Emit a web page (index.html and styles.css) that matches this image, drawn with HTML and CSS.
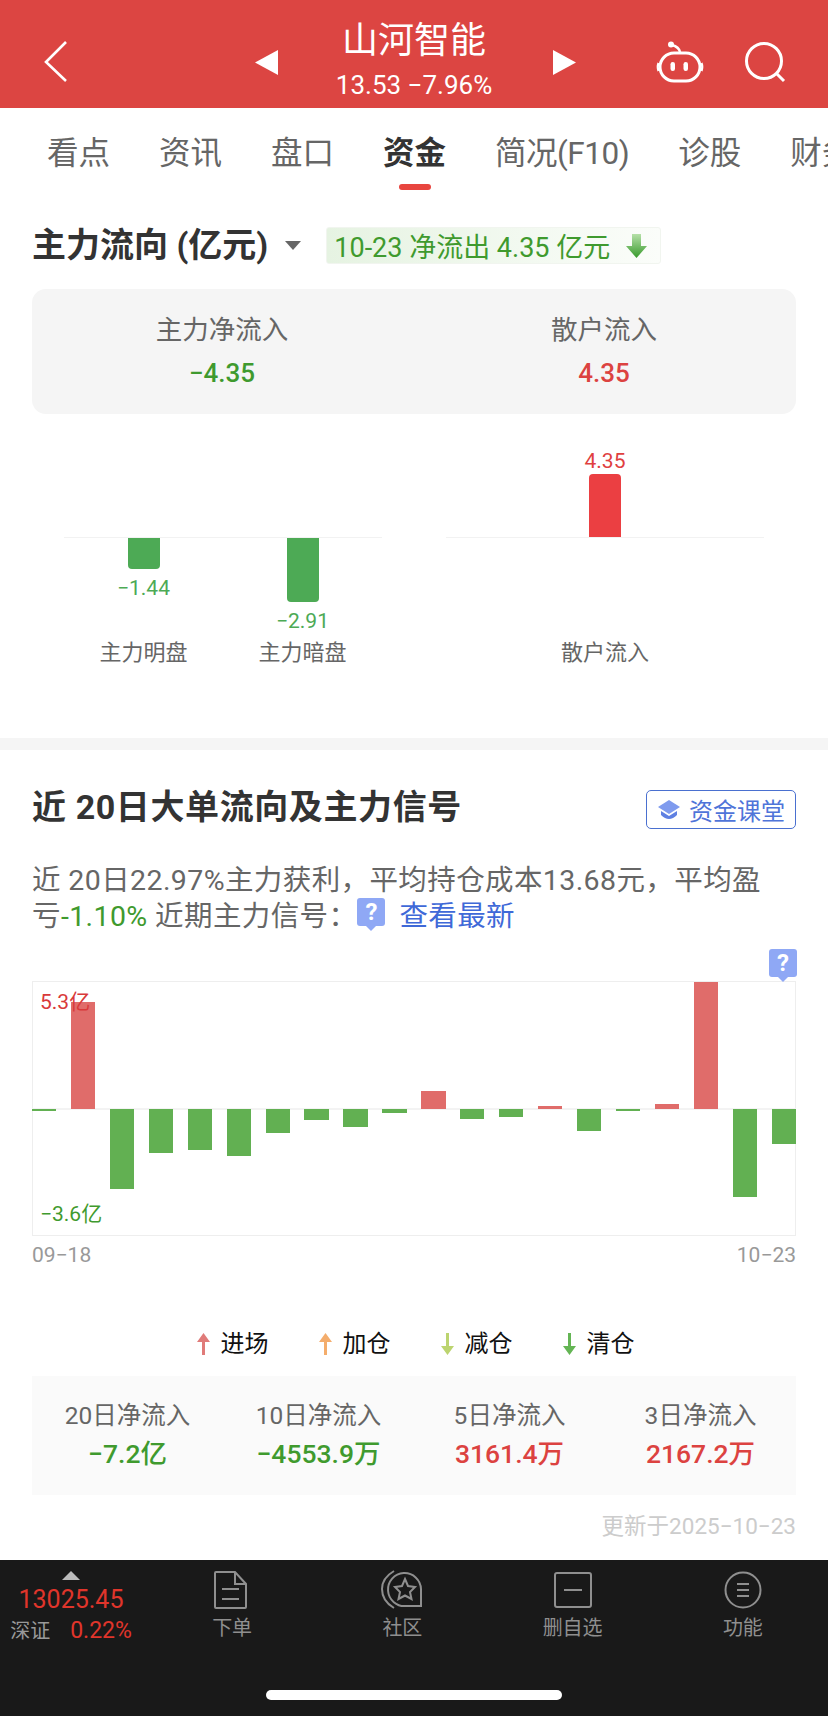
FILE: index.html
```html
<!DOCTYPE html>
<html lang="zh-CN">
<head>
    <meta charset="UTF-8">
    <meta name="viewport" content="width=device-width, initial-scale=1.0">
    <title>山河智能 资金</title>
    <link rel="stylesheet" href="styles.css">
</head>
<body>
<div class="page">

  <!-- 顶部导航 -->
  <header class="topbar">
    <div class="topbar-left">
      <svg width="24" height="42" viewBox="0 0 24 42"><polyline points="22,1 2,21 22,40" fill="none" stroke="#fff" stroke-width="2.6"/></svg>
    </div>
    <div class="stock-switch">
      <svg width="23" height="25" viewBox="0 0 23 25"><polygon points="23,0 0,12.5 23,25" fill="#fff"/></svg>
      <div class="stock-name">
        <div class="stock-title">山河智能</div>
        <div class="stock-price">13.53 −7.96%</div>
      </div>
      <svg class="stock-next" width="23" height="25" viewBox="0 0 23 25"><polygon points="0,0 23,12.5 0,25" fill="#fff"/></svg>
    </div>
    <div class="topbar-right">
      <svg width="48" height="42" viewBox="0 0 48 42" fill="none" stroke="#fff" stroke-width="3">
        <rect x="4" y="12" width="40" height="28" rx="14"/>
        <path d="M2.5 22 Q1 26 2.5 30 M45.5 22 Q47 26 45.5 30" stroke-width="2.2"/>
        <path d="M24 11 Q23 6 16 4" stroke-width="2.5"/>
        <circle cx="15" cy="3.5" r="3" fill="#fff" stroke="none"/>
        <rect x="14.5" y="21" width="4.5" height="9" rx="2.2" fill="#fff" stroke="none"/>
        <rect x="27.5" y="21" width="4.5" height="9" rx="2.2" fill="#fff" stroke="none"/>
      </svg>
      <svg width="42" height="42" viewBox="0 0 42 42" fill="none" stroke="#fff" stroke-width="3">
        <circle cx="19" cy="20" r="17.5"/>
        <path d="M32 33 L39 40"/>
      </svg>
    </div>
  </header>

  <!-- 标签栏 -->
  <nav class="tabs">
    <div class="tab">看点</div>
    <div class="tab">资讯</div>
    <div class="tab">盘口</div>
    <div class="tab on">资金</div>
    <div class="tab tab-wide">简况(F10)</div>
    <div class="tab">诊股</div>
    <div class="tab">财务</div>
  </nav>

  <!-- 主力流向 -->
  <section class="flow">
    <div class="flow-head">
      <h2 class="flow-title">主力流向 (亿元)</h2>
      <svg class="caret" width="16" height="9" viewBox="0 0 16 9"><polygon points="0,0 16,0 8,9" fill="#666"/></svg>
      <div class="flow-badge">
        <span>10-23 净流出 4.35 亿元</span>
        <svg width="21" height="24" viewBox="0 0 21 24">
          <defs><linearGradient id="arrowFill" x1="0" y1="0" x2="0" y2="1"><stop offset="0" stop-color="#b5e0a8"/><stop offset="1" stop-color="#379a2b"/></linearGradient></defs>
          <polygon points="6,0 15,0 15,12 21,12 10.5,24 0,12 6,12" fill="url(#arrowFill)"/>
        </svg>
      </div>
    </div>

    <div class="flow-card">
      <div class="flow-cell">
        <div class="flow-label">主力净流入</div>
        <div class="flow-value down">−4.35</div>
      </div>
      <div class="flow-cell">
        <div class="flow-label">散户流入</div>
        <div class="flow-value up">4.35</div>
      </div>
    </div>

    <div class="split">
      <div class="split-group">
        <div class="split-col">
          <div class="split-up"></div>
          <div class="split-down">
            <div class="split-bar bar-down" style="height:31px"></div>
            <div class="split-num num-down">−1.44</div>
          </div>
          <div class="split-name">主力明盘</div>
        </div>
        <div class="split-col">
          <div class="split-up"></div>
          <div class="split-down">
            <div class="split-bar bar-down" style="height:64px"></div>
            <div class="split-num num-down">−2.91</div>
          </div>
          <div class="split-name">主力暗盘</div>
        </div>
      </div>
      <div class="split-group">
        <div class="split-col">
          <div class="split-up">
            <div class="split-num num-up">4.35</div>
            <div class="split-bar bar-up" style="height:63px"></div>
          </div>
          <div class="split-down"></div>
          <div class="split-name">散户流入</div>
        </div>
      </div>
    </div>
  </section>

  <div class="band"></div>

  <!-- 近20日大单 -->
  <section class="large">
    <div class="large-head">
      <h2 class="large-title">近 20日大单流向及主力信号</h2>
      <div class="class-btn">
        <svg width="22" height="22" viewBox="0 0 22 22">
          <polygon points="11,1 22,8 11,15 0,8" fill="#7f9bee"/>
          <path d="M3 12 L11 17 L19 12 V16 Q11 24 3 16 Z" fill="#5f80e2"/>
        </svg>
        <span>资金课堂</span>
      </div>
    </div>

    <p class="large-text">近 20日22.97%主力获利，平均持仓成本13.68元，平均盈<br>亏<span class="text-down">-1.10%</span> 近期主力信号：<span class="qmark">?</span><span class="text-link">查看最新</span></p>

    <div class="chart">
      <span class="qmark chart-q">?</span>
      <span class="chart-max">5.3亿</span>
      <span class="chart-min">−3.6亿</span>
      <div class="chart-bars" id="chartBars"></div>
    </div>
    <div class="chart-dates"><span>09−18</span><span>10−23</span></div>

    <div class="legend">
      <div class="legend-item">
        <svg width="13" height="22" viewBox="0 0 13 22"><polygon points="6.5,0 13,9 8,9 8,22 5,22 5,9 0,9" fill="#e07b79"/></svg>
        <span>进场</span>
      </div>
      <div class="legend-item">
        <svg width="13" height="22" viewBox="0 0 13 22"><polygon points="6.5,0 13,9 8,9 8,22 5,22 5,9 0,9" fill="#f4ad6c"/></svg>
        <span>加仓</span>
      </div>
      <div class="legend-item">
        <svg width="13" height="22" viewBox="0 0 13 22"><polygon points="5,0 8,0 8,13 13,13 6.5,22 0,13 5,13" fill="#bcd46f"/></svg>
        <span>减仓</span>
      </div>
      <div class="legend-item">
        <svg width="13" height="22" viewBox="0 0 13 22"><polygon points="5,0 8,0 8,13 13,13 6.5,22 0,13 5,13" fill="#64b554"/></svg>
        <span>清仓</span>
      </div>
    </div>

    <div class="stats">
      <div class="stat"><div class="stat-label">20日净流入</div><div class="stat-value down">−7.2亿</div></div>
      <div class="stat"><div class="stat-label">10日净流入</div><div class="stat-value down">−4553.9万</div></div>
      <div class="stat"><div class="stat-label">5日净流入</div><div class="stat-value up">3161.4万</div></div>
      <div class="stat"><div class="stat-label">3日净流入</div><div class="stat-value up">2167.2万</div></div>
    </div>
    <div class="updated">更新于2025−10−23</div>
  </section>

  <!-- 底部工具栏 -->
  <footer class="dock">
    <div class="dock-row">
      <div class="index">
        <svg width="18" height="9" viewBox="0 0 18 9"><polygon points="9,0 18,9 0,9" fill="#bbb"/></svg>
        <div class="index-num">13025.45</div>
        <div class="index-line"><span class="index-name">深证</span><span class="index-pct">0.22%</span></div>
      </div>
      <div class="dock-item">
        <svg width="36" height="40" viewBox="2 0 36 40" fill="none" stroke="#8f8f8f" stroke-width="2">
          <path d="M3 3 Q3 2 4 2 H23 L34 14 V37 Q34 38 33 38 H4 Q3 38 3 37 Z"/>
          <path d="M23 2 V14 H34"/>
          <path d="M10 19 H27 M10 29 H27"/>
        </svg>
        <div class="dock-label">下单</div>
      </div>
      <div class="dock-item">
        <svg width="42" height="40" viewBox="0 0 42 40" fill="none" stroke="#8f8f8f" stroke-width="2">
          <path d="M40 36 H25 A16.5 16.5 0 1 1 40 19 Z"/>
          <path d="M13 1 Q1 8 1 19 Q1 31 13 38"/>
          <polygon points="24,9 27,16 34,17 29,22 30.5,29 24,25.5 17.5,29 19,22 14,17 21,16"/>
        </svg>
        <div class="dock-label">社区</div>
      </div>
      <div class="dock-item">
        <svg width="38" height="40" viewBox="0 0 38 40" fill="none" stroke="#8f8f8f" stroke-width="2">
          <rect x="1" y="3" width="36" height="34" rx="2"/>
          <path d="M10 20 H28"/>
        </svg>
        <div class="dock-label">删自选</div>
      </div>
      <div class="dock-item">
        <svg width="38" height="40" viewBox="0 0 38 40" fill="none" stroke="#8f8f8f" stroke-width="2">
          <circle cx="19" cy="20" r="17.5"/>
          <path d="M13 14 H25 M13 20 H25 M13 26 H25"/>
        </svg>
        <div class="dock-label">功能</div>
      </div>
    </div>
    <div class="home-bar"></div>
  </footer>

</div>

<script>
  // 近20日柱状图，正值向上、负值向下，单位为像素高度
  const bars = [-2, 107, -80, -44, -41, -47, -24, -11, -18, -4, 18, -10, -8, 3, -22, -2, 5, 127, -88, -35];
  const box = document.getElementById('chartBars');
  bars.forEach(v => {
    const col = document.createElement('div');
    col.className = 'chart-col';
    const bar = `<div class="chart-bar ${v > 0 ? 'bar-red' : 'bar-green'}" style="height:${Math.abs(v)}px"></div>`;
    col.innerHTML = `<div class="chart-top">${v > 0 ? bar : ''}</div><div class="chart-bottom">${v < 0 ? bar : ''}</div>`;
    box.appendChild(col);
  });
</script>
</body>
</html>
```

FILE: styles.css
```css
* {
    box-sizing: border-box;
    margin: 0;
    padding: 0;
}

body {
    font-family: Roboto, "Noto Sans CJK SC", sans-serif;
    background-color: #fff;
    color: #333;
}

.page {
    width: 828px;
    height: 1716px;
    display: flex;
    flex-direction: column;
    overflow: hidden;
}

.up { color: #dc4240; }
.down { color: #3f9a2e; }

/* 顶部导航 */
.topbar {
    flex: none;
    height: 108px;
    padding-top: 16px;
    background-color: #dc4542;
    display: grid;
    grid-template-columns: 1fr auto 1fr;
    align-items: center;
    color: #fff;
}

.topbar-left {
    padding: 0 0 0 44px;
    display: flex;
}

.topbar-right {
    padding: 0 41px 0 0;
    display: flex;
    justify-content: flex-end;
    gap: 41px;
}

.stock-switch {
    display: flex;
    align-items: center;
    gap: 58px;
    margin-left: 3px;
}

.stock-name {
    text-align: center;
    margin-bottom: 5px;
}

.stock-title {
    font-size: 36px;
    line-height: 44px;
}

.stock-price {
    font-size: 26px;
    line-height: 30px;
    margin-top: 7px;
    white-space: nowrap;
}

.stock-next {
    margin-left: 3px;
}

/* 标签栏 */
.tabs {
    flex: none;
    height: 84px;
    padding: 28px 0 0 47px;
    display: flex;
    gap: 49px;
    white-space: nowrap;
    overflow: hidden;
}

.tab {
    font-size: 31.5px;
    line-height: 36px;
    color: #666;
}

.tab-wide {
    letter-spacing: -0.5px;
}

.tab.on {
    color: #333;
    font-weight: 700;
}

.tab.on::after {
    content: "";
    display: block;
    width: 32px;
    height: 6px;
    margin: 12px auto 0;
    border-radius: 3px;
    background-color: #e8453f;
}

/* 主力流向 */
.flow {
    flex: none;
    height: 546px;
    padding: 35px 32px 0;
}

.flow-head {
    display: flex;
    align-items: center;
    height: 37px;
}

.flow-title {
    font-size: 34px;
    line-height: 37px;
    font-weight: 700;
    color: #333;
    white-space: nowrap;
}

.caret {
    margin: 0 25px 0 17px;
}

.flow-badge {
    height: 37px;
    width: 335px;
    padding: 0 13px 0 7px;
    display: flex;
    align-items: center;
    justify-content: space-between;
    font-size: 27px;
    color: #3f9a2e;
    white-space: nowrap;
    border: 1px solid #f1f5ef;
    border-radius: 3px;
    background: linear-gradient(90deg, #e6f3e2, #fbfdfa);
}

.flow-card {
    height: 125px;
    margin-top: 25px;
    border-radius: 14px;
    background-color: #f5f5f5;
    display: grid;
    grid-template-columns: 380px 1fr;
}

.flow-cell {
    text-align: center;
    padding-top: 23px;
}

.flow-label {
    font-size: 26.5px;
    line-height: 36px;
    color: #666;
}

.flow-value {
    font-size: 26px;
    line-height: 36px;
    font-weight: 500;
    margin-top: 7px;
}

.split {
    display: flex;
    gap: 64px;
    margin-top: 35px;
    padding: 0 32px;
}

.split-group {
    flex: 1;
    display: flex;
}

.split-col {
    flex: 1;
}

.split-up {
    height: 89px;
    display: flex;
    flex-direction: column;
    justify-content: flex-end;
    align-items: center;
    border-bottom: 1px solid #f2f2f2;
}

.split-down {
    height: 100px;
    display: flex;
    flex-direction: column;
    align-items: center;
}

.split-bar {
    width: 32px;
}

.bar-up {
    background-color: #eb3f42;
    border-radius: 4px 4px 0 0;
}

.bar-down {
    background-color: #4daa55;
    border-radius: 0 0 4px 4px;
}

.split-num {
    font-size: 21px;
    line-height: 22px;
}

.num-up {
    color: #e0403f;
    margin-bottom: 2px;
}

.num-down {
    color: #4daa55;
    margin-top: 8px;
}

.split-name {
    font-size: 22px;
    line-height: 30px;
    text-align: center;
    color: #666;
}

.band {
    flex: none;
    height: 12px;
    background-color: #f5f5f5;
}

/* 近20日大单 */
.large {
    flex: 1;
    padding: 40px 32px 0;
}

.large-head {
    display: flex;
    justify-content: space-between;
    align-items: center;
    height: 39px;
}

.large-title {
    font-size: 34px;
    line-height: 39px;
    font-weight: 700;
    letter-spacing: 0.6px;
    color: #333;
    margin-top: -5px;
    white-space: nowrap;
}

.class-btn {
    width: 150px;
    height: 39px;
    display: flex;
    align-items: center;
    gap: 9px;
    padding-left: 11px;
    font-size: 24px;
    color: #4f74d9;
    border: 1.5px solid #4a70d0;
    border-radius: 5px;
    white-space: nowrap;
}

.large-text {
    font-size: 28.5px;
    line-height: 36px;
    letter-spacing: 0.4px;
    color: #666;
    margin-top: 34px;
    white-space: nowrap;
}

.text-down {
    color: #3f9a2e;
}

.text-link {
    color: #3f69d8;
    margin-left: 14px;
}

.qmark {
    position: relative;
    display: inline-block;
    width: 28px;
    height: 28px;
    line-height: 28px;
    text-align: center;
    font-size: 24px;
    font-weight: 700;
    letter-spacing: 0;
    color: #fff;
    background-color: #8fa8f5;
    border-radius: 3px;
}

.large-text .qmark {
    vertical-align: 6px;
    margin-top: -8px;
}

.qmark::after {
    content: "";
    position: absolute;
    left: 9px;
    top: 28px;
    border: 5px solid transparent;
    border-top-color: #8fa8f5;
    border-bottom-width: 0;
}

.chart {
    position: relative;
    height: 255px;
    margin-top: 46px;
    border: 1px solid #eee;
}

.chart-q {
    position: absolute;
    top: -33px;
    right: -2px;
}

.chart-max,
.chart-min {
    position: absolute;
    left: 7px;
    font-size: 21px;
    line-height: 24px;
    z-index: 1;
}

.chart-max {
    top: 8px;
    color: #d9393a;
}

.chart-min {
    top: 220px;
    color: #3f9a2e;
}

.chart-bars {
    height: 100%;
    margin: 0 -1px;
    display: flex;
    justify-content: space-between;
    background: linear-gradient(#f3f3f3, #f3f3f3) 0 126px / 100% 2px no-repeat;
}

.chart-col {
    width: 24.3px;
    display: flex;
    flex-direction: column;
}

.chart-top,
.chart-bottom {
    flex: 1;
    display: flex;
    flex-direction: column;
}

.chart-top {
    justify-content: flex-end;
}

.bar-red {
    background-color: #e06c6a;
}

.bar-green {
    background-color: #62b052;
}

.chart-dates {
    display: flex;
    justify-content: space-between;
    font-size: 21px;
    line-height: 24px;
    color: #999;
    margin-top: 7px;
}

.legend {
    display: flex;
    justify-content: center;
    gap: 50px;
    margin-top: 62px;
    margin-left: 3px;
}

.legend-item {
    display: flex;
    align-items: center;
    gap: 11px;
    font-size: 24px;
    line-height: 30px;
    color: #111;
}

.stats {
    height: 119px;
    margin-top: 17px;
    padding-top: 25px;
    background-color: #fafafa;
    display: grid;
    grid-template-columns: repeat(4, 1fr);
    text-align: center;
}

.stat-label {
    font-size: 24.5px;
    line-height: 30px;
    color: #666;
    white-space: nowrap;
}

.stat-value {
    font-size: 26.5px;
    line-height: 36px;
    font-weight: 500;
    margin-top: 5px;
    white-space: nowrap;
}

.updated {
    font-size: 22.5px;
    line-height: 30px;
    text-align: right;
    color: #ccc;
    margin-top: 16px;
}

/* 底部工具栏 */
.dock {
    flex: none;
    height: 156px;
    background-color: #191919;
    color: #8f8f8f;
}

.dock-row {
    height: 90px;
    display: flex;
}

.index {
    flex: none;
    width: 147px;
    padding: 11px 15px 0 10px;
    display: flex;
    flex-direction: column;
    align-items: center;
}

.index svg {
    flex: none;
}

.index-num {
    font-size: 25px;
    line-height: 28px;
    margin-top: 6px;
    color: #e0352b;
}

.index-line {
    display: flex;
    gap: 20px;
    margin-top: 4px;
    line-height: 26px;
    white-space: nowrap;
}

.index-name {
    font-size: 20px;
    color: #999;
}

.index-pct {
    font-size: 23px;
    color: #e0352b;
}

.dock-item {
    flex: 1;
    padding-top: 10px;
    display: flex;
    flex-direction: column;
    align-items: center;
}

.dock-label {
    font-size: 20px;
    line-height: 26px;
    margin-top: 5px;
}

.home-bar {
    width: 296px;
    height: 10px;
    margin: 40px auto 0;
    border-radius: 5px;
    background-color: #fff;
}
```
